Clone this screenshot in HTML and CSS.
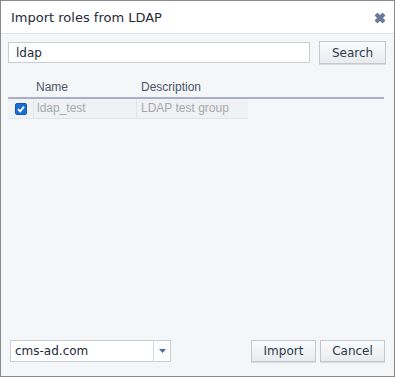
FILE: index.html
```html
<!DOCTYPE html>
<html lang="en">
<head>
  <meta charset="UTF-8">
  <title>Import roles from LDAP</title>
  <link rel="stylesheet" href="styles.css">
</head>
<body>
  <div class="dialog">
    <div class="dialog_head">
      <span class="dialog_title">Import roles from LDAP</span>
      <svg class="close_icon" width="12" height="12" viewBox="0 0 12 12">
        <path d="M1.5 3.5 L3.5 1.5 L6 4 L8.5 1.5 L10.5 3.5 L8 6 L10.5 8.5 L8.5 10.5 L6 8 L3.5 10.5 L1.5 8.5 L4 6 Z" fill="#6b7a99" stroke="#6b7a99" stroke-width="1.4" stroke-linejoin="round"/>
      </svg>
    </div>

    <div class="dialog_body">
      <div class="search_row">
        <input class="search_input" value="ldap">
        <button class="btn search_btn">Search</button>
      </div>

      <div class="grid">
        <div class="grid_head">
          <div class="col_check"></div>
          <div class="col_name">Name</div>
          <div class="col_desc">Description</div>
        </div>
        <div class="grid_row">
          <div class="col_check"><span class="checkbox"><svg width="8" height="8" viewBox="0 0 8 8"><path d="M1 4.2 L3.2 6.4 L7 1.6" fill="none" stroke="#fff" stroke-width="1.8"/></svg></span></div>
          <div class="col_name cell">ldap_test</div>
          <div class="col_desc cell">LDAP test group</div>
        </div>
      </div>
    </div>

    <div class="dialog_foot">
      <div class="combo">
        <span class="combo_text">cms-ad.com</span>
        <span class="combo_arrow"><svg width="7" height="4" viewBox="0 0 7 4"><path d="M0 0 L7 0 L3.5 4 Z" fill="#4d6fa0"/></svg></span>
      </div>
      <div class="foot_buttons">
        <button class="btn foot_btn">Import</button>
        <button class="btn foot_btn">Cancel</button>
      </div>
    </div>
  </div>
</body>
</html>
```

FILE: styles.css
```css
body{
  margin: 0;
  background-color: #ffffff;
}

.dialog{
  width: 393px;
  height: 375px;
  border: 1px solid #8a8a8a;
  background-color: #f5f6f8;
  display: flex;
  flex-direction: column;
  font-family: "DejaVu Sans", Verdana, sans-serif;
}

.dialog_head{
  height: 32px;
  background-color: #ffffff;
  border-bottom: 1px solid #dfe2e6;
  display: flex;
  align-items: center;
  justify-content: space-between;
  padding: 0 8px 0 10px;
}

.dialog_title{
  font-size: 13px;
  color: #1f2a3a;
  padding-top: 1px;
}

.close_icon{
  margin-top: 1px;
}

.dialog_body{
  flex: 1;
  padding: 7px 7px 0 7px;
}

.search_row{
  display: flex;
  align-items: center;
}

.search_input{
  width: 293px;
  height: 19px;
  padding: 0 0 0 7px;
  margin: 0;
  border: 1px solid #c9ced6;
  background-color: #ffffff;
  font-family: "DejaVu Sans", Verdana, sans-serif;
  font-size: 12px;
  color: #1f2a3a;
  outline: none;
}

.btn{
  height: 23px;
  padding: 0;
  border: 1px solid #c4c9d1;
  background: linear-gradient(#fafbfc, #e9ebee);
  font-family: "DejaVu Sans", Verdana, sans-serif;
  font-size: 12px;
  color: #2c3a4f;
  box-shadow: 0 1px 0 #d8dbe0;
}

.search_btn{
  width: 67px;
  margin-left: 9px;
}

.grid{
  margin-top: 13px;
  width: 376px;
  font-family: "Liberation Sans", Arial, sans-serif;
  font-size: 12px;
}

.grid_head{
  display: flex;
  height: 20px;
  align-items: center;
  border-bottom: 2px solid #a7b0c4;
  color: #4a5568;
}

.grid_row{
  display: flex;
  width: 240px;
  height: 19px;
  align-items: center;
  background-color: #f0f1f2;
  border-bottom: 1px solid #e3e4e6;
  color: #a6a9ad;
}

.col_check{
  width: 25px;
  display: flex;
  justify-content: center;
}

.col_name{
  width: 103px;
  padding-left: 3px;
}

.col_desc{
  width: 100px;
  padding-left: 4px;
}

.grid_head .col_name{
  padding-left: 3px;
}

.grid_head .col_desc{
  padding-left: 2px;
}

.cell{
  height: 19px;
  line-height: 19px;
  border-left: 1px solid #e3e4e6;
  box-sizing: border-box;
}

.col_desc.cell{
  width: 108px;
}

.checkbox{
  width: 10px;
  height: 10px;
  border-radius: 2px;
  background-color: #1a6fd6;
  border: 1px solid #1458b0;
  display: flex;
  align-items: center;
  justify-content: center;
}

.dialog_foot{
  height: 22px;
  display: flex;
  justify-content: space-between;
  padding: 0 9px 14px 9px;
}

.combo{
  width: 159px;
  height: 20px;
  border: 1px solid #c9ced6;
  background-color: #ffffff;
  display: flex;
  align-items: center;
}

.combo_text{
  flex: 1;
  padding-left: 4px;
  font-size: 12px;
  color: #1f2a3a;
}

.combo_arrow{
  width: 16px;
  height: 20px;
  border-left: 1px solid #d6dae0;
  display: flex;
  align-items: center;
  justify-content: center;
}

.foot_buttons{
  display: flex;
  gap: 4px;
}

.foot_btn{
  width: 65px;
  height: 22px;
}
```
